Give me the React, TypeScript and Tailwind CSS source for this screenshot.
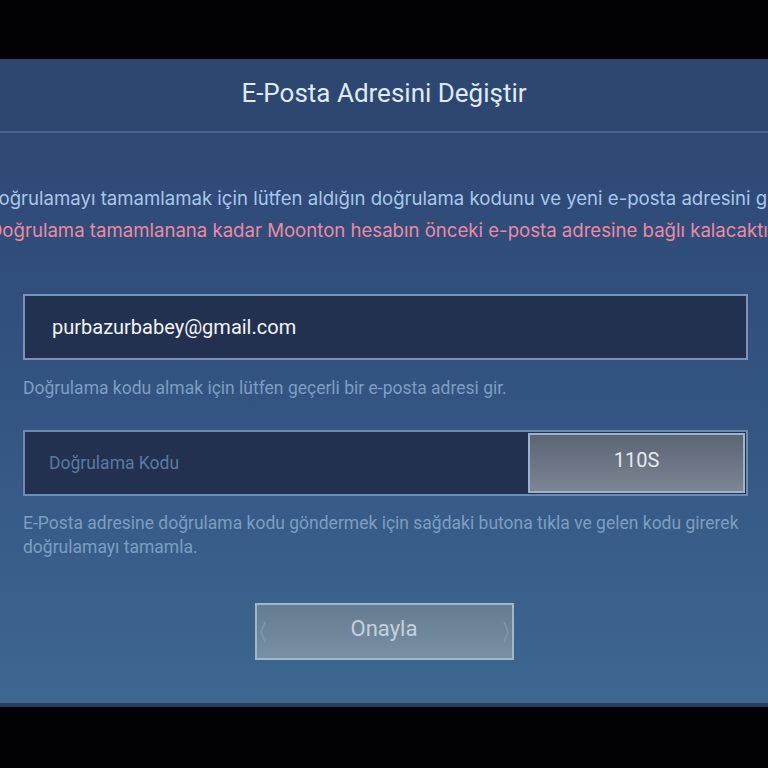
export default function App() {
  return (
    <div className="w-[768px] h-[768px] bg-black flex flex-col overflow-hidden font-['Roboto','Inter',sans-serif]">
      <div className="h-[59px] shrink-0 bg-[#020204]" />
      <div className="flex-1 flex flex-col bg-gradient-to-b from-[#2d4570] via-[#335380] to-[#3d6890]">
        {/* header */}
        <div className="h-[74px] shrink-0 flex items-center justify-center bg-[#2e4771] border-b-2 border-[#4a6894]">
          <h1 className="text-[26px] text-[#dfeaf6] -mt-[4px]">E-Posta Adresini Değiştir</h1>
        </div>

        {/* info */}
        <div className="mt-[53px] flex flex-col gap-[8px] font-['Inter',sans-serif] text-[18.6px] leading-[24px]">
          <div className="flex justify-center whitespace-nowrap text-[#a7c8ea]">
            <span>Doğrulamayı tamamlamak için lütfen aldığın doğrulama kodunu ve yeni e-posta adresini gir.</span>
          </div>
          <div className="flex justify-center whitespace-nowrap text-[#ec8aa3]">
            <span>Doğrulama tamamlanana kadar Moonton hesabın önceki e-posta adresine bağlı kalacaktır.</span>
          </div>
        </div>

        <div className="ml-[23px] mr-[20px] mt-[52px] flex flex-col">
          {/* email */}
          <div className="h-[66px] flex items-center pl-[27px] bg-[#22314f] border-2 border-[#7894ba]">
            <span className="text-[20px] text-[#f1f4f8]">purbazurbabey@gmail.com</span>
          </div>
          <p className="mt-[16px] text-[17.5px] text-[#7d9ec3] leading-[24px]">
            Doğrulama kodu almak için lütfen geçerli bir e-posta adresi gir.
          </p>

          {/* code */}
          <div className="mt-[30px] h-[66px] flex bg-[#22314f] border-2 border-[#6d8ab0]">
            <div className="flex-1 flex items-center pl-[24px]">
              <span className="text-[17.5px] text-[#5a7aa1]">Doğrulama Kodu</span>
            </div>
            <div className="w-[217px] m-[1px] flex items-center justify-center bg-gradient-to-b from-[#5b6574] to-[#7b8593] border-2 border-[#9db2cc]">
              <span className="text-[20px] text-[#e4e9ef] -mt-[6px]">110S</span>
            </div>
          </div>
          <p className="mt-[15px] text-[17.5px] text-[#7d9ec3] leading-[24px]">
            E-Posta adresine doğrulama kodu göndermek için sağdaki butona tıkla ve gelen kodu girerek doğrulamayı tamamla.
          </p>
        </div>

        {/* confirm */}
        <div className="mt-[44px] flex justify-center">
          <div className="relative w-[259px] h-[57px] flex items-center justify-center bg-gradient-to-b from-[#667c90] to-[#7890a4] border-2 border-[#9fb6cc]">
            <svg className="absolute left-[2px] top-[16px]" width="8" height="22" viewBox="0 0 8 22">
              <path d="M6 1 L2 11 L6 21" stroke="#7f96ab" strokeWidth="1.5" fill="none" />
            </svg>
            <svg className="absolute right-[2px] top-[16px]" width="8" height="22" viewBox="0 0 8 22">
              <path d="M2 1 L6 11 L2 21" stroke="#7f96ab" strokeWidth="1.5" fill="none" />
            </svg>
            <span className="text-[22px] text-[#c3d1de] -mt-[6px]">Onayla</span>
          </div>
        </div>

        <div className="flex-1" />
        <div className="h-[4px] bg-[#2a3d5e]" />
      </div>
      <div className="h-[61px] shrink-0 bg-[#020204]" />
    </div>
  );
}
